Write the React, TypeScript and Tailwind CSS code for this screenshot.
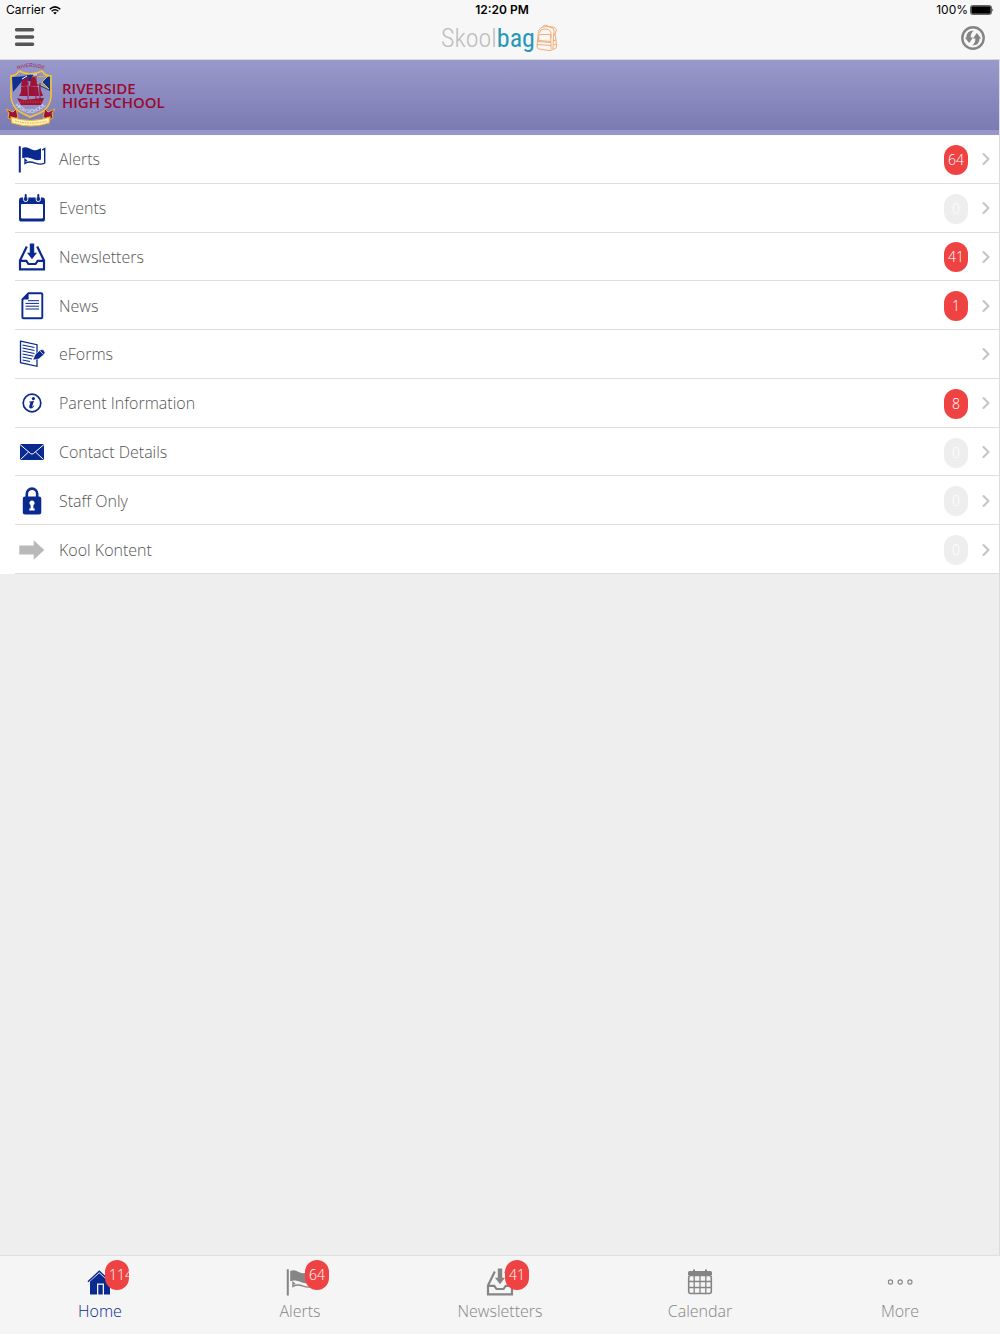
import type { ReactNode } from 'react';
import { ChevronRight } from 'lucide-react';

type IconName = 'flag' | 'events' | 'inbox' | 'news' | 'forms' | 'info' | 'mail' | 'lock' | 'arrow' | 'home' | 'calendar' | 'more';

const ICONS: Record<IconName, ReactNode> = {
  flag: (
    <>
      <path d="M.8 1.600Q1.800.2 2.800 1.600V27.500H.8z" fill="currentColor" />
      <path d="M4.200 3C10 .4 13 5.600 17 5.200 20 5 21.400 3.600 23 3.200V14.500C16 17.500 13 10.500 4.200 13.200z" fill="currentColor" />
      <path d="M24.300 5.200 26.700 3.600V18C19 22.500 15 13.500 7 18.400V14.500L9 16" fill="none" stroke="currentColor" strokeWidth="1.400" />
    </>
  ),
  events: (
    <>
      <path fillRule="evenodd" d="M3.500 3.600H24.500Q27 3.600 27 6V25Q27 27.600 24.500 27.600H3.500Q1 27.600 1 25V6Q1 3.600 3.500 3.600zM4.200 10Q3 10 3 11V23.500Q3 24.600 4.200 24.600H23.800Q25 24.600 25 23.500V11Q25 10 23.800 10z" fill="currentColor" />
      <path d="M5.600 3V5.500a2.100 2.100 0 0 0 4.200 0V3M18.200 3V5.500a2.100 2.100 0 0 0 4.200 0V3" fill="none" stroke="white" strokeWidth="1" />
      <path d="M7.700 1V6M20.300 1V6" stroke="currentColor" strokeWidth="2" strokeLinecap="round" />
    </>
  ),
  inbox: (
    <>
      <path d="M11.800.5H16.200V9.700H19L14 16.300 9 9.700H11.800z" fill="currentColor" />
      <path d="M8.800 3.500 2 17.500V26.400H26V17.500L19.200 3.500M2 17.800H8.300L10.500 21H17.500L19.700 17.800H26" fill="none" stroke="currentColor" strokeWidth="2.200" />
    </>
  ),
  news: (
    <>
      <path d="M10.500 1.200H23.200Q24.300 1.200 24.300 2.300V25.200Q24.300 26.300 23.200 26.300H5.500Q4.400 26.300 4.400 25.200V7.500z" fill="none" stroke="currentColor" strokeWidth="1.900" />
      <path d="M4.200 7.600 10.600 1V7.600z" fill="currentColor" />
      <path d="M10 8.700H21M7.500 11.400H21M7.500 14.200H21M7.500 17H21" stroke="currentColor" strokeWidth="1" />
    </>
  ),
  forms: (
    <>
      <path d="M2.500 1.200 19 4.700V26.300L2.500 22.700z" fill="none" stroke="currentColor" strokeWidth="1.300" />
      <path d="M4.500 5 16.500 7.500M4.500 8 16.500 10.500M4.500 11 16.500 13.500M4.500 14 15.500 16.300M4.500 17 14 19M4.500 20 12 21.500" stroke="currentColor" strokeWidth="1.100" />
      <path d="M15 20 17 14.800 22 10.200Q24 8.800 26 10.500 27.600 12.500 26 14.500L20.700 19z" fill="currentColor" stroke="white" strokeWidth=".5" />
      <path d="M22 10.900 25.400 14.600" stroke="white" strokeWidth=".7" />
    </>
  ),
  info: (
    <>
      <circle cx="14" cy="14" r="8.800" fill="none" stroke="currentColor" strokeWidth="1.700" />
      <circle cx="15.400" cy="9.600" r="1.600" fill="currentColor" />
      <path d="M11.400 12.500Q14 12.400 16 11.700L14.100 17.800Q14.900 17.800 15.900 16.200L16.500 16.700Q14.700 19.600 12.500 19.400 10.700 19.200 11.200 17.200L12.400 13.500H11.200z" fill="currentColor" />
    </>
  ),
  mail: (
    <>
      <path d="M2 6H26V22H2z" fill="currentColor" />
      <path d="M2 6.500 12.600 15.600Q14 16.700 15.400 15.600L26 6.500M2.500 21.500 10.500 14M25.500 21.500 17.500 14" fill="none" stroke="white" strokeWidth="1" />
    </>
  ),
  lock: (
    <>
      <path d="M8.800 10V6.800a5.200 5.200 0 0 1 10.400 0V10" fill="none" stroke="currentColor" strokeWidth="2.600" />
      <rect x="4.800" y="9.500" width="18.500" height="18" rx="2.200" fill="currentColor" />
      <path d="M14 13.500a2.500 2.500 0 0 1 1.400 4.600V21.500H16.700V23.500H11.300V21.500H12.600V18.100A2.500 2.500 0 0 1 14 13.500z" fill="white" />
    </>
  ),
  arrow: <path d="M1.300 9.400H15.700V4.200L26.300 14 15.700 23.800V18.600H1.300z" fill="currentColor" />,
  home: (
    <>
      <path d="M13.300 5.200 21.700 12.800H24V26.500H18V15.500H11V26.500H4V13.500z" fill="currentColor" />
      <path d="M12.300 16.800H16.700V26.500H12.300z" fill="currentColor" />
      <path d="M2 13.700 13.300 3.300 24.600 13.700M19.500 3.700H22V9" fill="none" stroke="currentColor" strokeWidth="1.500" />
    </>
  ),
  calendar: (
    <>
      <path d="M3.500 3H7V1.500H9V3H19V1.500H21V3H24.500Q26 3 26 4.500V7H2V4.500Q2 3 3.500 3z" fill="currentColor" />
      <rect x="2.700" y="7.500" width="22.600" height="18" rx="2" fill="none" stroke="currentColor" strokeWidth="1.600" />
      <path d="M2 13.500H26M2 19.500H26M8.200 8V26M14 8V26M19.800 8V26" stroke="currentColor" strokeWidth="1.300" />
    </>
  ),
  more: (
    <g fill="none" stroke="currentColor" strokeWidth="1.100">
      <circle cx="4.500" cy="14" r="2.100" />
      <circle cx="14.200" cy="14" r="2.100" />
      <circle cx="23.900" cy="14" r="2.100" />
    </g>
  ),
};

const MENU: { label: string; icon: IconName; count?: number }[] = [
  { label: 'Alerts', icon: 'flag', count: 64 },
  { label: 'Events', icon: 'events', count: 0 },
  { label: 'Newsletters', icon: 'inbox', count: 41 },
  { label: 'News', icon: 'news', count: 1 },
  { label: 'eForms', icon: 'forms' },
  { label: 'Parent Information', icon: 'info', count: 8 },
  { label: 'Contact Details', icon: 'mail', count: 0 },
  { label: 'Staff Only', icon: 'lock', count: 0 },
  { label: 'Kool Kontent', icon: 'arrow', count: 0 },
];

const TABS: { label: string; icon: IconName; count?: number }[] = [
  { label: 'Home', icon: 'home', count: 114 },
  { label: 'Alerts', icon: 'flag', count: 64 },
  { label: 'Newsletters', icon: 'inbox', count: 41 },
  { label: 'Calendar', icon: 'calendar' },
  { label: 'More', icon: 'more' },
];

function Icon({ name }: { name: IconName }) {
  return <svg viewBox="0 0 28 28" className="w-7 h-7 shrink-0" aria-hidden="true">{ICONS[name]}</svg>;
}

function Badge({ count }: { count: number }) {
  // long counts start at the left and run off the right edge of the pill
  return (
    <span className={`flex w-6 h-[30px] items-center overflow-hidden rounded-xl text-sm font-light text-white ${count > 9 ? 'justify-start pl-1' : 'justify-center'} ${count ? 'bg-[#ef4343]' : 'bg-[#eeeeee]'}`}>
      {count}
    </span>
  );
}

function StatusBar() {
  return (
    <div className="grid grid-cols-3 items-center h-5 px-[6px] text-xs text-black font-['Inter',sans-serif]">
      <div className="flex items-center gap-1">
        Carrier
        <svg viewBox="0 0 12 9" className="w-3 h-[9px]" aria-hidden="true">
          <path d="M.7 3.200Q6-1.400 11.300 3.200M2.600 5.200Q6 2.300 9.400 5.200" fill="none" stroke="currentColor" strokeWidth="1.500" />
          <path d="M4.100 6.600Q6 5.200 7.900 6.600L6 8.600z" fill="currentColor" />
        </svg>
      </div>
      <div className="text-center font-semibold pl-1">12:20 PM</div>
      <div className="flex items-center justify-end gap-[2px]">
        100%
        <svg viewBox="0 0 24 10" className="w-6 h-[10px]" aria-hidden="true">
          <rect x=".5" y=".5" width="21" height="9" rx="2" fill="none" stroke="currentColor" strokeWidth=".6" />
          <rect x="1.300" y="1.300" width="19.400" height="7.400" rx="1" fill="currentColor" />
          <path d="M22.500 3.500Q24 5 22.500 6.500z" fill="currentColor" />
        </svg>
      </div>
    </div>
  );
}

function Backpack() {
  return (
    <svg viewBox="0 0 24 28" className="w-6 h-7" fill="none" stroke="#f0a565" strokeWidth=".9" strokeLinejoin="round" aria-hidden="true">
      <path d="M3 12Q3 4 8 3Q13 1.500 18 4Q20 7 18.500 12L18 25Q17 27 14 26.500L4 25Q2 25 2 22z" />
      <path d="M7.500 3Q8 .8 11 1.200 13 1.400 13 3M4.500 9Q5 5 9 5 14 4.500 16 8L16 14" />
      <path d="M4 10.500H15.500L16 17.500 3.500 16.500zM2 17.500 16 18.500V25.500M2 20.500 16 21.500" />
      <path d="M14 3Q20 2 21.500 6L20 10 21 16 21.500 23Q20 26 18 25M18.500 10 20 11M18 17 21 16M18.500 21 21.500 20" />
    </svg>
  );
}

function Crest() {
  return (
    <svg viewBox="0 0 54 66" className="w-[54px] h-[66px]" aria-hidden="true">
      <defs>
        <path id="crest-top" d="M11 9Q27 1 43 9" />
        <path id="crest-low" d="M10 42Q26 60 43 42" />
      </defs>
      <path d="M7 14Q12 14 15 9L26 12 37 9Q41 14 47 14V35Q46 46 36 51L26 55 18 51Q8 46 7 35z" fill="#9191c4" />
      <path d="M8 15Q21 15 26 12 34 15 46 14V29L36 24 40 28 31 20 19 18 9 30z" fill="#0f3190" />
      <path d="M28 15 44 14 38 20 45 27 35 22 28 21z" fill="#8c94c8" stroke="#ecc038" strokeWidth=".9" />
      <path d="M7 14Q12 14 15 9 21 12 26 12 32 12 38 9 41 14 47 14V35Q46 46 36 51L26 55 18 51Q8 46 7 35z" fill="none" stroke="#f4c435" strokeWidth="1.600" />
      <path d="M18 18 23 16 24 23Q21 25 17 24zM27 15 31 15 34 24H26zM17 25 23 24 24 34 15 34Q18 30 17 25zM25 24 34 25 35 34H25zM35 23 39 34H36zM13 36 20 38 37 36 40 36 37 43H17z" fill="#9d1239" />
      <path d="M24 14V38M32 13V37M36 21V37M16 39 37 38M17 41 35 40" stroke="#a41939" strokeWidth="1" />
      <path d="M16 40H38" stroke="#dfa23c" strokeWidth=".6" strokeDasharray="1 1.500" />
      <path d="M18 17 23 14M29 13 33 13" stroke="white" strokeWidth="1" />
      <path d="M2 47 9 50 12 47 14 55 9 58 4 56 5 51zM51 47 44 50 41 47 39 55 44 58 49 56 48 51z" fill="#9d1239" stroke="#efbb35" strokeWidth=".9" />
      <path d="M7 55Q27 62 46 55L45 61Q27 67 8 61z" fill="#fff1bd" stroke="#eeb62f" strokeWidth="1.200" />
      <text fontFamily="Liberation Sans, sans-serif" fontSize="5" fill="#a3204f"><textPath href="#crest-top" startOffset="50%" textAnchor="middle">RIVERSIDE</textPath></text>
      <text fontFamily="Liberation Sans, sans-serif" fontSize="5" fill="#eef0ff"><textPath href="#crest-low" startOffset="50%" textAnchor="middle">HIGH SCHOOL</textPath></text>
      <path d="M11 59Q27 63 43 59" fill="none" stroke="#d7a83c" strokeWidth="1" strokeDasharray="1.500 1" />
    </svg>
  );
}

function NavBar() {
  return (
    <div className="flex items-center justify-between h-[39px] px-[15px] pb-1">
      <button type="button" aria-label="Menu" className="w-12 pb-[2px] text-[#555555]">
        <svg viewBox="0 0 20 18" className="w-5 h-[18px]" aria-hidden="true">
          <path d="M1.700 1.800H17.500M1.700 9H17.500M1.700 16.200H17.500" stroke="currentColor" strokeWidth="3.600" strokeLinecap="round" />
        </svg>
      </button>
      <div className="flex items-center text-[26px] leading-8 font-['Roboto_Condensed','Liberation_Sans',sans-serif]">
        <span className="font-light text-[#bdbdbd]">Skool</span>
        <span className="text-[#2797b8]">bag</span>
        <Backpack />
      </div>
      <button type="button" aria-label="Refresh" className="flex w-12 justify-end pt-px text-[#858585]">
        <svg viewBox="0 0 24 24" className="w-6 h-6" aria-hidden="true">
          <circle cx="12" cy="12" r="10.700" fill="none" stroke="currentColor" strokeWidth="2.400" />
          <path d="M12.800 4.500Q5.200 4.700 5.500 11.500H3.800L8.200 17 12 11.500H9.600Q9.600 7 12.800 4.500zM11.200 19.500Q18.800 19.300 18.500 12.500H20.200L15.800 7 12 12.500H14.400Q14.400 17 11.200 19.500z" fill="currentColor" />
        </svg>
      </button>
    </div>
  );
}

export default function App() {
  return (
    <div className="flex flex-col min-h-screen bg-[#eeeeee] font-['Open_Sans',sans-serif]">
      <header className="bg-[#f7f7f7] border-b border-[#d8d8dc]">
        <StatusBar />
        <NavBar />
      </header>

      <main className="grow border-r border-[#dcdcdc]">
        <div className="flex items-center h-[75px] pl-1 gap-1 border-b-[5px] border-[#9797cb] bg-linear-to-b from-[#9999cc] to-[#7b7bb3]">
          <Crest />
          <h1 className="text-[15px] leading-[14px] font-semibold text-[#9b0a30] font-['Open_Sans',sans-serif]">
            <span className="block">RIVERSIDE</span>
            <span className="block">HIGH SCHOOL</span>
          </h1>
        </div>

        <ul className="grid grid-rows-9 h-[439px] bg-white">
          {MENU.map((item) => (
            <li key={item.label} className="pl-[15px]">
              <a href="#" className="flex items-center h-full pt-px px-[3px] border-b border-[#dedede]">
                <span className={item.icon === 'arrow' ? 'text-[#b9b9b9]' : 'text-[#0b2a8f]'}><Icon name={item.icon} /></span>
                <span className="grow pl-[13px] text-base font-light text-[#555555]">{item.label}</span>
                {item.count !== undefined && <span className="pt-px"><Badge count={item.count} /></span>}
                <ChevronRight strokeWidth={2.5} className="w-5 h-5 ml-2 text-[#c4c4c8]" aria-hidden="true" />
              </a>
            </li>
          ))}
        </ul>
      </main>

      <nav className="grid grid-cols-5 h-[79px] border-t border-[#e0e0e0] bg-[#f5f5f5]">
        {TABS.map((tab) => (
          <a key={tab.label} href="#" className={`flex flex-col items-center pt-3 gap-[3px] ${tab.icon === 'home' ? 'text-[#0b2a8f]' : 'text-[#858585]'}`}>
            <span className="relative">
              <Icon name={tab.icon} />
              {tab.count !== undefined && <span className="absolute -top-2 left-[19px]"><Badge count={tab.count} /></span>}
            </span>
            <span className="text-base font-light">{tab.label}</span>
          </a>
        ))}
      </nav>
    </div>
  );
}
